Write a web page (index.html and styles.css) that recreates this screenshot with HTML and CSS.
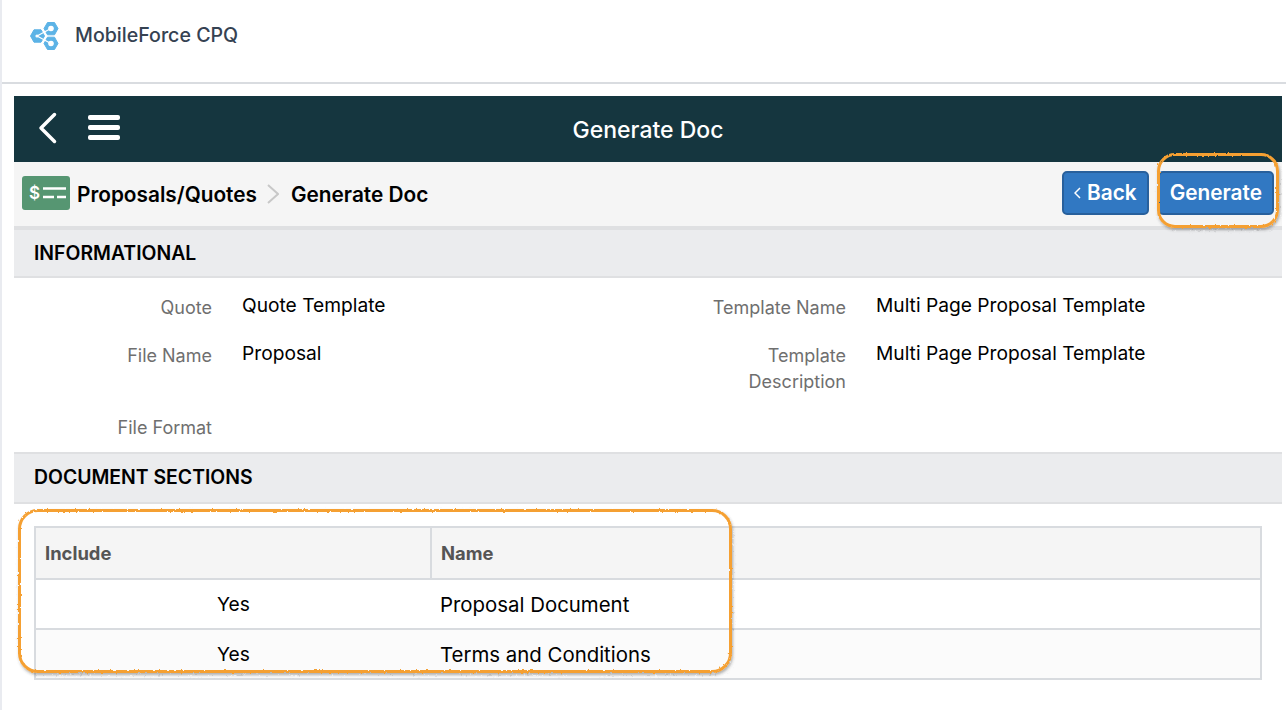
FILE: index.html
```html
<!DOCTYPE html>
<html lang="en">
<head>
    <meta charset="UTF-8">
    <title>MobileForce CPQ</title>
    <link rel="stylesheet" href="styles.css">
</head>
<body>
    <header class="topbar">
        <svg class="logo" width="29" height="28" viewBox="0 0 29 28">
            <g fill="#5cb3e6" stroke="#5cb3e6" stroke-linejoin="round">
                <path d="M14 6.500 L17.500 0.500 L24.500 0.500 L28 6.500 L24.500 12.800 L17.500 12.800 Z"/>
                <path d="M0.500 14 L4 7.800 L11 7.800 L14.500 14 L11 20.200 L4 20.200 Z"/>
                <path d="M14 21.500 L17.500 15.200 L24.500 15.200 L28 21.500 L24.500 27.500 L17.500 27.500 Z"/>
            </g>
            <g fill="#fff" stroke="#fff" stroke-width="1.200">
                <path d="M7 14 L20 7 M7 14 L20 21" fill="none"/>
                <circle cx="7" cy="14" r="1"/>
                <circle cx="21" cy="6.500" r="2.200"/>
                <circle cx="21" cy="21.500" r="2.200"/>
            </g>
        </svg>
        <span class="brand">MobileForce CPQ</span>
    </header>

    <main class="panel">
        <div class="navbar">
            <svg class="nav-back" width="20" height="32" viewBox="0 0 20 32">
                <path d="M16.500 2.500 L3 16 L16.500 29.500" fill="none" stroke="#fff" stroke-width="3.500" stroke-linecap="round" stroke-linejoin="round"/>
            </svg>
            <div class="burger"><i></i><i></i><i></i></div>
            <h1 class="nav-title">Generate Doc</h1>
        </div>

        <div class="crumbs">
            <div class="crumb-icon">
                <svg width="48" height="34" viewBox="0 0 48 34">
                    <rect width="48" height="34" rx="3" fill="#569672"/>
                    <path d="M21 12.500 H44 M21 21 H32 M35 21 H44" stroke="#fff" stroke-width="2.500"/>
                </svg>
                <span class="dollar">$</span>
            </div>
            <span class="crumb">Proposals/Quotes</span>
            <svg class="crumb-sep" width="12" height="22" viewBox="0 0 12 22">
                <path d="M1 2 L11 11 L1 20" fill="none" stroke="#c8c8c8" stroke-width="2"/>
            </svg>
            <span class="crumb">Generate Doc</span>
            <div class="actions">
                <button class="btn btn-back"><svg width="7" height="12" viewBox="0 0 7 12"><path d="M6 1 L1 6 L6 11" fill="none" stroke="#fff" stroke-width="1.500"/></svg>Back</button>
                <button class="btn btn-generate">Generate</button>
            </div>
        </div>

        <div class="section-head first">INFORMATIONAL</div>
        <div class="info">
            <div class="label">Quote</div>
            <div class="value">Quote Template</div>
            <div class="label">Template Name</div>
            <div class="value">Multi Page Proposal Template</div>

            <div class="label">File Name</div>
            <div class="value">Proposal</div>
            <div class="label">Template<br>Description</div>
            <div class="value">Multi Page Proposal Template</div>

            <div class="label">File Format</div>
            <div class="value"></div>
        </div>

        <div class="section-head">DOCUMENT SECTIONS</div>
        <div class="table-wrap">
            <table class="sections">
                <thead>
                    <tr><th class="col-include">Include</th><th class="col-name">Name</th><th></th></tr>
                </thead>
                <tbody>
                    <tr><td class="yes">Yes</td><td class="doc">Proposal Document</td><td></td></tr>
                    <tr class="alt"><td class="yes">Yes</td><td class="doc">Terms and Conditions</td><td></td></tr>
                </tbody>
            </table>
            <div class="mark mark-table"></div>
        </div>
        <div class="mark mark-generate"></div>
    </main>

    <!-- wobble for the hand drawn orange outlines -->
    <svg class="defs" width="0" height="0">
        <filter id="rough">
            <feTurbulence type="fractalNoise" baseFrequency="0.35" numOctaves="2" seed="4"/>
            <feDisplacementMap in="SourceGraphic" scale="2.500"/>
        </filter>
    </svg>
</body>
</html>
```

FILE: styles.css
```css
html, body {
    margin: 0;
    height: 710px;
    overflow: hidden;
}
body {
    font-family: Inter, "Liberation Sans", sans-serif;
    font-size: 19.2px;
    color: #000;
    background: #fff;
    border-left: 2px solid #e9ebf0;
    box-sizing: border-box;
}
.defs {
    display: block;
}
.topbar {
    height: 82px;
    display: flex;
    align-items: center;
    padding-left: 28px;
    gap: 16px;
    border-bottom: 2px solid #d9dce0;
}
.logo {
    margin-top: -10px;
}
.brand {
    font-size: 19.6px;
    font-weight: 500;
    color: #354252;
    margin-top: -12px;
}
.panel {
    position: relative;
    margin: 12px 4px 0 12px;
}
.navbar {
    height: 66px;
    background: #15363f;
    display: flex;
    align-items: center;
    position: relative;
    padding-left: 24px;
}
.nav-back {
    margin-top: -2px;
}
.burger {
    margin: -4px 0 0 30px;
    width: 32px;
    display: flex;
    flex-direction: column;
    gap: 5px;
}
.burger i {
    display: block;
    height: 5px;
    border-radius: 2px;
    background: #fff;
}
.nav-title {
    position: absolute;
    left: 0;
    right: 0;
    margin: 2px 0 0;
    text-align: center;
    font-size: 23px;
    font-weight: 500;
    color: #fff;
}
.crumbs {
    height: 64px;
    background: #f5f5f5;
    display: flex;
    align-items: center;
    padding-left: 8px;
    font-weight: 600;
    font-size: 20.800px;
}
.crumb {
    margin-top: 1px;
}
.crumb-icon {
    position: relative;
    width: 48px;
    height: 34px;
    margin-right: 7px;
    margin-top: -3px;
}
.crumb-icon svg {
    display: block;
}
.dollar {
    position: absolute;
    left: 7px;
    top: 0;
    line-height: 34px;
    color: #fff;
    font-size: 17px;
    font-weight: 600;
}
.crumb-sep {
    margin: 0 12px 0 10px;
}
.actions {
    margin-left: auto;
    display: flex;
    gap: 9px;
    margin-right: 8px;
    margin-top: -3px;
}
.btn {
    height: 44px;
    font-family: inherit;
    font-size: 20.800px;
    font-weight: 600;
    color: #fff;
    background: #3178c2;
    border: 2px solid #28609c;
    border-radius: 5px;
    padding: 0 10px;
    display: flex;
    align-items: center;
    gap: 6px;
}
.section-head {
    height: 52px;
    background: #ebecee;
    border-top: 2px solid #dfe0e2;
    border-bottom: 2px solid #dfe0e2;
    font-size: 19.400px;
    font-weight: 600;
    padding: 0 0 2px 20px;
    display: flex;
    align-items: center;
    box-sizing: border-box;
}
.section-head.first {
    border-top-width: 4px;
    padding-bottom: 0;
}
.info {
    display: grid;
    grid-template-columns: 198px 374px 200px 1fr;
    grid-template-rows: 48px 72px 54px;
    column-gap: 30px;
    height: 174px;
}
.label {
    text-align: right;
    color: #6f6f6f;
    font-size: 18px;
    line-height: 26px;
    padding-top: 17px;
}
.value {
    line-height: 26px;
    padding-top: 14px;
}
.table-wrap {
    position: relative;
    padding: 22px 20px 0;
}
.sections {
    width: 100%;
    border-collapse: collapse;
    border: 2px solid #d8dbdf;
}
.sections th {
    height: 50px;
    background: #f5f5f5;
    color: #555;
    font-size: 18.400px;
    font-weight: 700;
    text-align: left;
    padding: 0 9px;
    border-bottom: 2px solid #d8dbdf;
}
.col-include {
    width: 376px;
}
.col-name {
    width: 280px;
    border-left: 2px solid #d8dbdf;
}
.sections td {
    height: 48px;
    padding: 0 9px;
    border-bottom: 2px solid #d8dbdf;
}
.sections td.yes {
    text-align: center;
}
.sections td.doc {
    font-size: 20.400px;
}
.alt td {
    background: #fbfbfb;
}
.mark {
    position: absolute;
    border: 3px solid #f5a033;
    box-shadow: 1px 2px 3px rgba(60, 60, 60, 0.4);
    filter: url(#rough);
}
.mark-table {
    left: 4px;
    top: 5px;
    width: 708px;
    height: 158px;
    border-radius: 20px;
}
.mark-generate {
    left: 1143px;
    top: 57px;
    width: 116px;
    height: 69px;
    border-radius: 18px;
}
```
